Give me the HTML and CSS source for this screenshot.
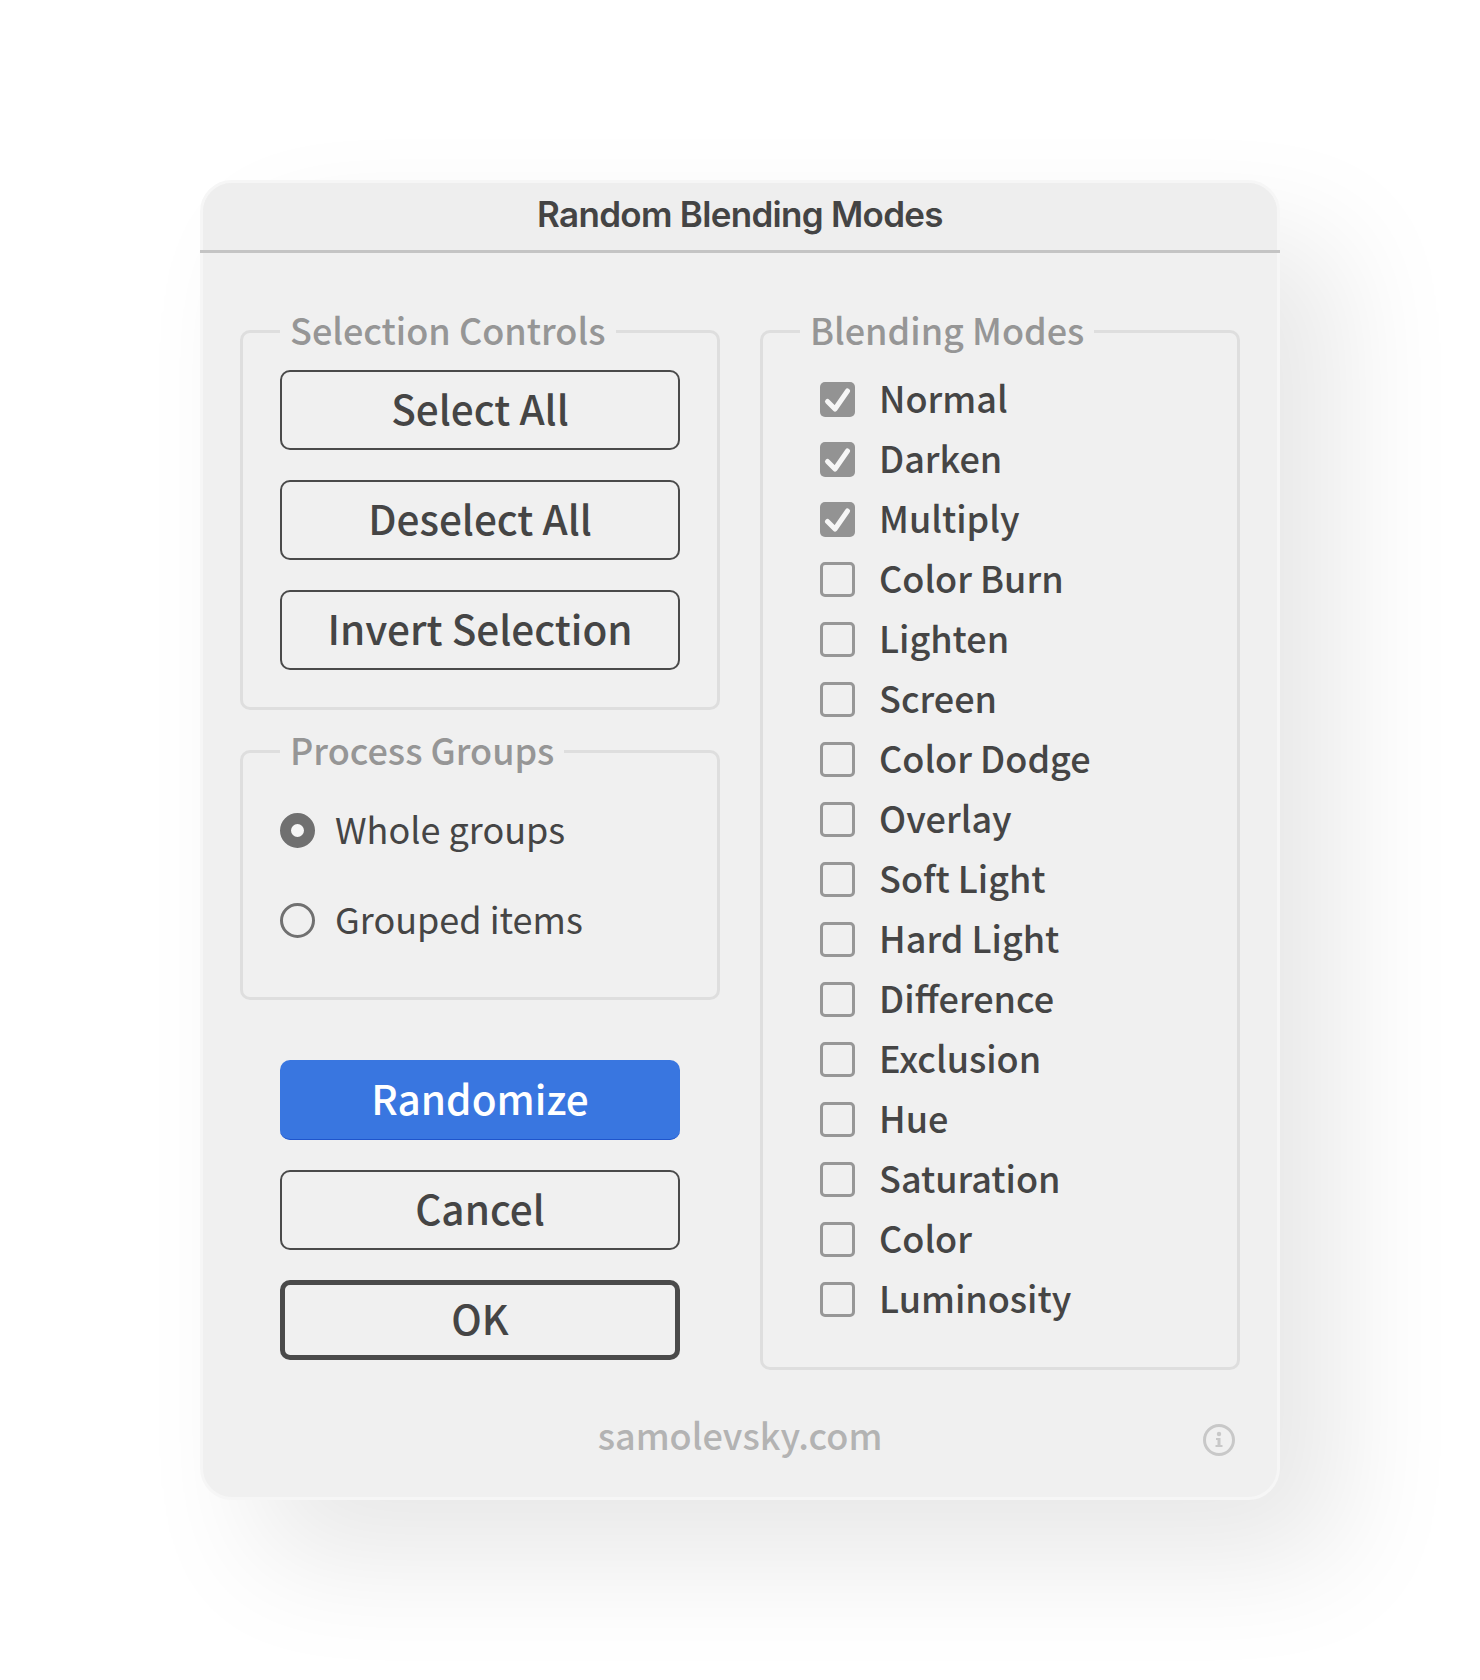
FILE: index.html
```html
<!DOCTYPE html>
<html lang="en">
<head>
<meta charset="utf-8">
<title>Random Blending Modes</title>
<link rel="stylesheet" href="styles.css">
</head>
<body>
<main class="dialog">
  <header class="titlebar">Random Blending Modes</header>
  <div class="content">
    <div class="column">
      <fieldset class="group group-controls">
        <legend>Selection Controls</legend>
        <div class="stack">
          <button class="btn">Select All</button>
          <button class="btn">Deselect All</button>
          <button class="btn">Invert Selection</button>
        </div>
      </fieldset>
      <fieldset class="group group-process">
        <legend>Process Groups</legend>
        <div class="radios">
          <div class="radio-row"><span class="radio radio-on"></span><span class="radio-label">Whole groups</span></div>
          <div class="radio-row"><span class="radio"></span><span class="radio-label">Grouped items</span></div>
        </div>
      </fieldset>
      <div class="stack actions">
        <button class="btn btn-primary">Randomize</button>
        <button class="btn">Cancel</button>
        <button class="btn btn-default">OK</button>
      </div>
    </div>
    <fieldset class="group group-modes">
      <legend>Blending Modes</legend>
      <ul class="modes">
        <li class="mode"><span class="check check-on"><svg viewBox="0 0 35 35"><path d="M7.5 19.5l7.5 7.5L27.5 9" /></svg></span>Normal</li>
        <li class="mode"><span class="check check-on"><svg viewBox="0 0 35 35"><path d="M7.5 19.5l7.5 7.5L27.5 9" /></svg></span>Darken</li>
        <li class="mode"><span class="check check-on"><svg viewBox="0 0 35 35"><path d="M7.5 19.5l7.5 7.5L27.5 9" /></svg></span>Multiply</li>
        <li class="mode"><span class="check"></span>Color Burn</li>
        <li class="mode"><span class="check"></span>Lighten</li>
        <li class="mode"><span class="check"></span>Screen</li>
        <li class="mode"><span class="check"></span>Color Dodge</li>
        <li class="mode"><span class="check"></span>Overlay</li>
        <li class="mode"><span class="check"></span>Soft Light</li>
        <li class="mode"><span class="check"></span>Hard Light</li>
        <li class="mode"><span class="check"></span>Difference</li>
        <li class="mode"><span class="check"></span>Exclusion</li>
        <li class="mode"><span class="check"></span>Hue</li>
        <li class="mode"><span class="check"></span>Saturation</li>
        <li class="mode"><span class="check"></span>Color</li>
        <li class="mode"><span class="check"></span>Luminosity</li>
      </ul>
    </fieldset>
  </div>
  <footer class="footer">
    <span class="site">samolevsky.com</span>
    <svg class="info" viewBox="0 0 32 32"><circle cx="16" cy="16" r="14.5"/><circle class="info-fill" cx="16" cy="10" r="2.2"/><path class="info-fill" d="M13 14h4.5v7h2v2h-7v-2h2v-5h-1.5z"/></svg>
  </footer>
</main>
</body>
</html>
```
FILE: styles.css
```css
* { box-sizing: border-box; }
html, body { margin: 0; background: #fff; }
body {
  width: 1480px;
  height: 1680px;
  padding: 180px 200px;
  font-family: "Noto Sans CJK SC", "Noto Sans", sans-serif;
  color: #454545;
}
.dialog {
  width: 1080px;
  height: 1320px;
  display: flex;
  flex-direction: column;
  background: #f0f0f0;
  border: 3px solid #f6f6f6;
  border-radius: 32px;
  box-shadow: 60px 60px 120px rgba(0, 0, 0, 0.095);
}
.titlebar {
  position: relative;
  height: 70px;
  flex: none;
  background: #eeeeee;
  border-radius: 29px 29px 0 0;
  padding-bottom: 9px;
  display: flex;
  align-items: center;
  justify-content: center;
  font-family: Inter, "Liberation Sans", sans-serif;
  font-weight: 600;
  font-size: 35px;
  letter-spacing: -0.7px;
  color: #444;
}
.titlebar::after {
  content: "";
  position: absolute;
  left: -3px;
  right: -3px;
  bottom: 0;
  height: 3px;
  background: #c4c4c4;
}
.content {
  display: grid;
  grid-template-columns: 480px 480px;
  column-gap: 40px;
  padding: 57px 37px 0;
  align-items: start;
}
.column { display: flex; flex-direction: column; }
.group {
  margin: 0;
  min-width: 0;
  padding: 17px 37px 0;
  border: 3px solid #dedede;
  border-radius: 10px;
}
.group legend {
  height: 43px;
  padding: 0 10px;
  font-size: 36px;
  line-height: 38px;
  font-weight: 500;
  color: #969696;
}
.group-controls { height: 400px; }
.group-process { height: 270px; margin-top: 20px; }
.group-modes { height: 1060px; padding-top: 14px; }
.stack { display: flex; flex-direction: column; gap: 30px; }
.actions { margin: 60px 40px 0; }
.btn {
  height: 80px;
  width: 100%;
  padding: 0 0 4px;
  background: transparent;
  border: 2px solid #4a4a4a;
  border-radius: 10px;
  font: 500 40.5px/1 "Noto Sans CJK SC", "Noto Sans", sans-serif;
  color: #454545;
}
.btn-primary {
  background: #3976e0;
  border: 0;
  border-bottom: 1px solid #1f55cc;
  padding-bottom: 2px;
  color: #fff;
}
.btn-default { border-width: 5px; }
.radios { display: flex; flex-direction: column; gap: 54px; padding-top: 22px; }
.radio-row {
  height: 36px;
  display: flex;
  align-items: center;
  gap: 20px;
  font-size: 36px;
  color: #454545;
}
.radio-label { margin-bottom: 4px; }
.radio {
  flex: none;
  width: 35px;
  height: 35px;
  border: 3px solid #707070;
  border-radius: 50%;
}
.radio-on { border: 11px solid #707070; background: #f6f6f6; }
.modes { list-style: none; margin: 0; padding: 0 0 0 20px; }
.mode {
  height: 60px;
  display: flex;
  align-items: center;
  gap: 24px;
  font-size: 36px;
  font-weight: 500;
  color: #454545;
}
.check {
  flex: none;
  width: 35px;
  height: 35px;
  margin-top: 5px;
  border: 3px solid #979797;
  border-radius: 5px;
}
.check-on { border: 0; background: #939393; }
.check svg {
  display: block;
  width: 35px;
  height: 35px;
  fill: none;
  stroke: #f6f6f6;
  stroke-width: 5px;
  stroke-linecap: round;
  stroke-linejoin: round;
}
.footer {
  flex: 1;
  display: grid;
  grid-template-columns: 1fr auto 1fr;
  align-items: center;
  padding: 0 42px;
}
.site {
  grid-column: 2;
  font-size: 36px;
  font-weight: 500;
  color: #b3b3b3;
}
.info {
  grid-column: 3;
  justify-self: end;
  margin-top: 13px;
  width: 32px;
  height: 32px;
  fill: none;
  stroke: #c8c8c8;
  stroke-width: 3px;
}
.info-fill { fill: #c8c8c8; stroke: none; }
```
